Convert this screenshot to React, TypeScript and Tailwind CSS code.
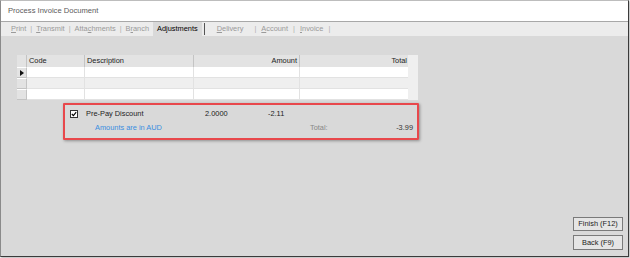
import React from "react";

const font = { fontFamily: '"Liberation Sans", Arial, sans-serif' };

function Tab({ u, rest, pre = "" }: { u: string; rest: string; pre?: string }) {
  return (
    <span className="text-[#9a9a9a]">
      {pre}
      <span className="underline">{u}</span>
      {rest}
    </span>
  );
}

export default function App() {
  const rows = [0, 1, 2];
  return (
    <div className="w-[630px] h-[258px] bg-white overflow-hidden" style={font}>
      <div className="w-[629px] h-[257px] border border-[#3a3a3a] border-t-[#bdbdbd] border-l-[#8a8a8a] flex flex-col bg-[#d9d9d9] shadow-[1px_1px_2px_rgba(0,0,0,0.3)]">
        {/* title bar */}
        <div className="h-[21px] bg-white border-b border-[#a8a8a8] flex items-center pl-[7px] text-[7.6px] text-[#5a5a5a] shrink-0">
          Process Invoice Document
        </div>
        {/* tab bar */}
        <div className="h-[14px] bg-[#ececec] flex items-stretch text-[7.4px] pl-[10px] shrink-0">
          <div className="flex items-center gap-[4px]">
            <Tab u="P" rest="rint" />
            <span className="text-[#b0b0b0]">|</span>
            <Tab u="T" rest="ransmit" />
            <span className="text-[#b0b0b0]">|</span>
            <Tab pre="Atta" u="c" rest="hments" />
            <span className="text-[#b0b0b0]">|</span>
            <Tab pre="B" u="r" rest="anch" />
          </div>
          <div className="ml-[4px] bg-[#d9d9d9] flex items-center px-[4px] text-black">Adjustments</div>
          <div className="w-[1px] bg-[#555] my-[1px] ml-[2px]" />
          <div className="flex items-center gap-[5px] ml-[12px]">
            <Tab u="D" rest="elivery" />
            <span className="text-[#b0b0b0] ml-[6px]">|</span>
            <Tab u="A" rest="ccount" />
            <span className="text-[#b0b0b0]">|</span>
            <Tab u="I" rest="nvoice" />
            <span className="text-[#b0b0b0]">|</span>
          </div>
        </div>
        {/* content */}
        <div className="flex-1 flex flex-col pl-[16px] pt-[19px] pr-[5px] pb-[6px] text-[7.4px]">
          {/* grid */}
          <div className="flex w-[401px]">
            <div className="w-[391px] flex flex-col">
              <div className="flex h-[12px] bg-[#e3e3e3] text-[#222]">
                <div className="w-[10px] border-r border-[#c4c4c4]" />
                <div className="w-[58px] border-r border-[#c4c4c4] pl-[2px] leading-[12px]">Code</div>
                <div className="w-[109px] border-r border-[#c4c4c4] pl-[2px] leading-[12px]">Description</div>
                <div className="w-[106px] border-r border-[#c4c4c4] pr-[2px] text-right leading-[12px]">Amount</div>
                <div className="w-[108px] pr-[1px] text-right leading-[12px]">Total</div>
              </div>
              {rows.map((r) => (
                <div key={r} className={`flex h-[11px] ${r === 1 ? "bg-[#efefef]" : "bg-white"}`}>
                  <div className="w-[10px] bg-[#e3e3e3] border-r border-b border-t border-[#c4c4c4] border-t-white flex items-center justify-center">
                    {r === 0 && (
                      <svg width="4" height="6" viewBox="0 0 4 6">
                        <path d="M0 0 L4 3 L0 6 Z" fill="#111" />
                      </svg>
                    )}
                  </div>
                  <div className="w-[58px] border-r border-b border-[#e2e2e2]" />
                  <div className="w-[109px] border-r border-b border-[#e2e2e2]" />
                  <div className="w-[106px] border-r border-b border-[#e2e2e2]" />
                  <div className="w-[108px] border-b border-[#e2e2e2]" />
                </div>
              ))}
            </div>
            <div className="w-[10px] bg-[#efefef]" />
          </div>
          {/* highlighted box */}
          <div className="ml-[46px] mt-[3px] w-[356px] h-[37px] border-2 border-[#e8484c] rounded-[1px] shadow-[1px_1px_3px_rgba(0,0,0,0.35)] relative">
            <div className="absolute left-[5px] top-[5px] w-[8px] h-[8px] bg-white border border-[#333] flex items-center justify-center">
              <svg width="6" height="6" viewBox="0 0 6 6">
                <path d="M0.8 3 L2.4 4.6 L5.2 1.2" stroke="#000" strokeWidth="1.1" fill="none" />
              </svg>
            </div>
            <div className="absolute left-[21px] top-[3px] text-[#222] leading-[12px]">Pre-Pay Discount</div>
            <div className="absolute left-[140px] top-[3px] text-[#222] leading-[12px]">2.0000</div>
            <div className="absolute left-[203px] top-[3px] text-[#222] leading-[12px]">-2.11</div>
            <div className="absolute left-[30px] top-[17px] text-[#3a8ee0] leading-[12px]">Amounts are in AUD</div>
            <div className="absolute left-[245px] top-[17px] text-[#888] leading-[12px]">Total:</div>
            <div className="absolute right-[4px] top-[17px] text-[#333] leading-[12px]">-3.99</div>
          </div>
          <div className="flex-1" />
          <div className="flex flex-col items-end gap-[4px]">
            <button className="w-[50px] h-[14px] bg-[#e5e5e5] border border-[#7a7a7a] text-[7.4px] text-[#222] leading-[12px] p-0">
              Finish (F12)
            </button>
            <button className="w-[50px] h-[15px] bg-[#e5e5e5] border border-[#7a7a7a] text-[7.4px] text-[#222] leading-[13px] p-0">
              Back (F9)
            </button>
          </div>
        </div>
      </div>
    </div>
  );
}
